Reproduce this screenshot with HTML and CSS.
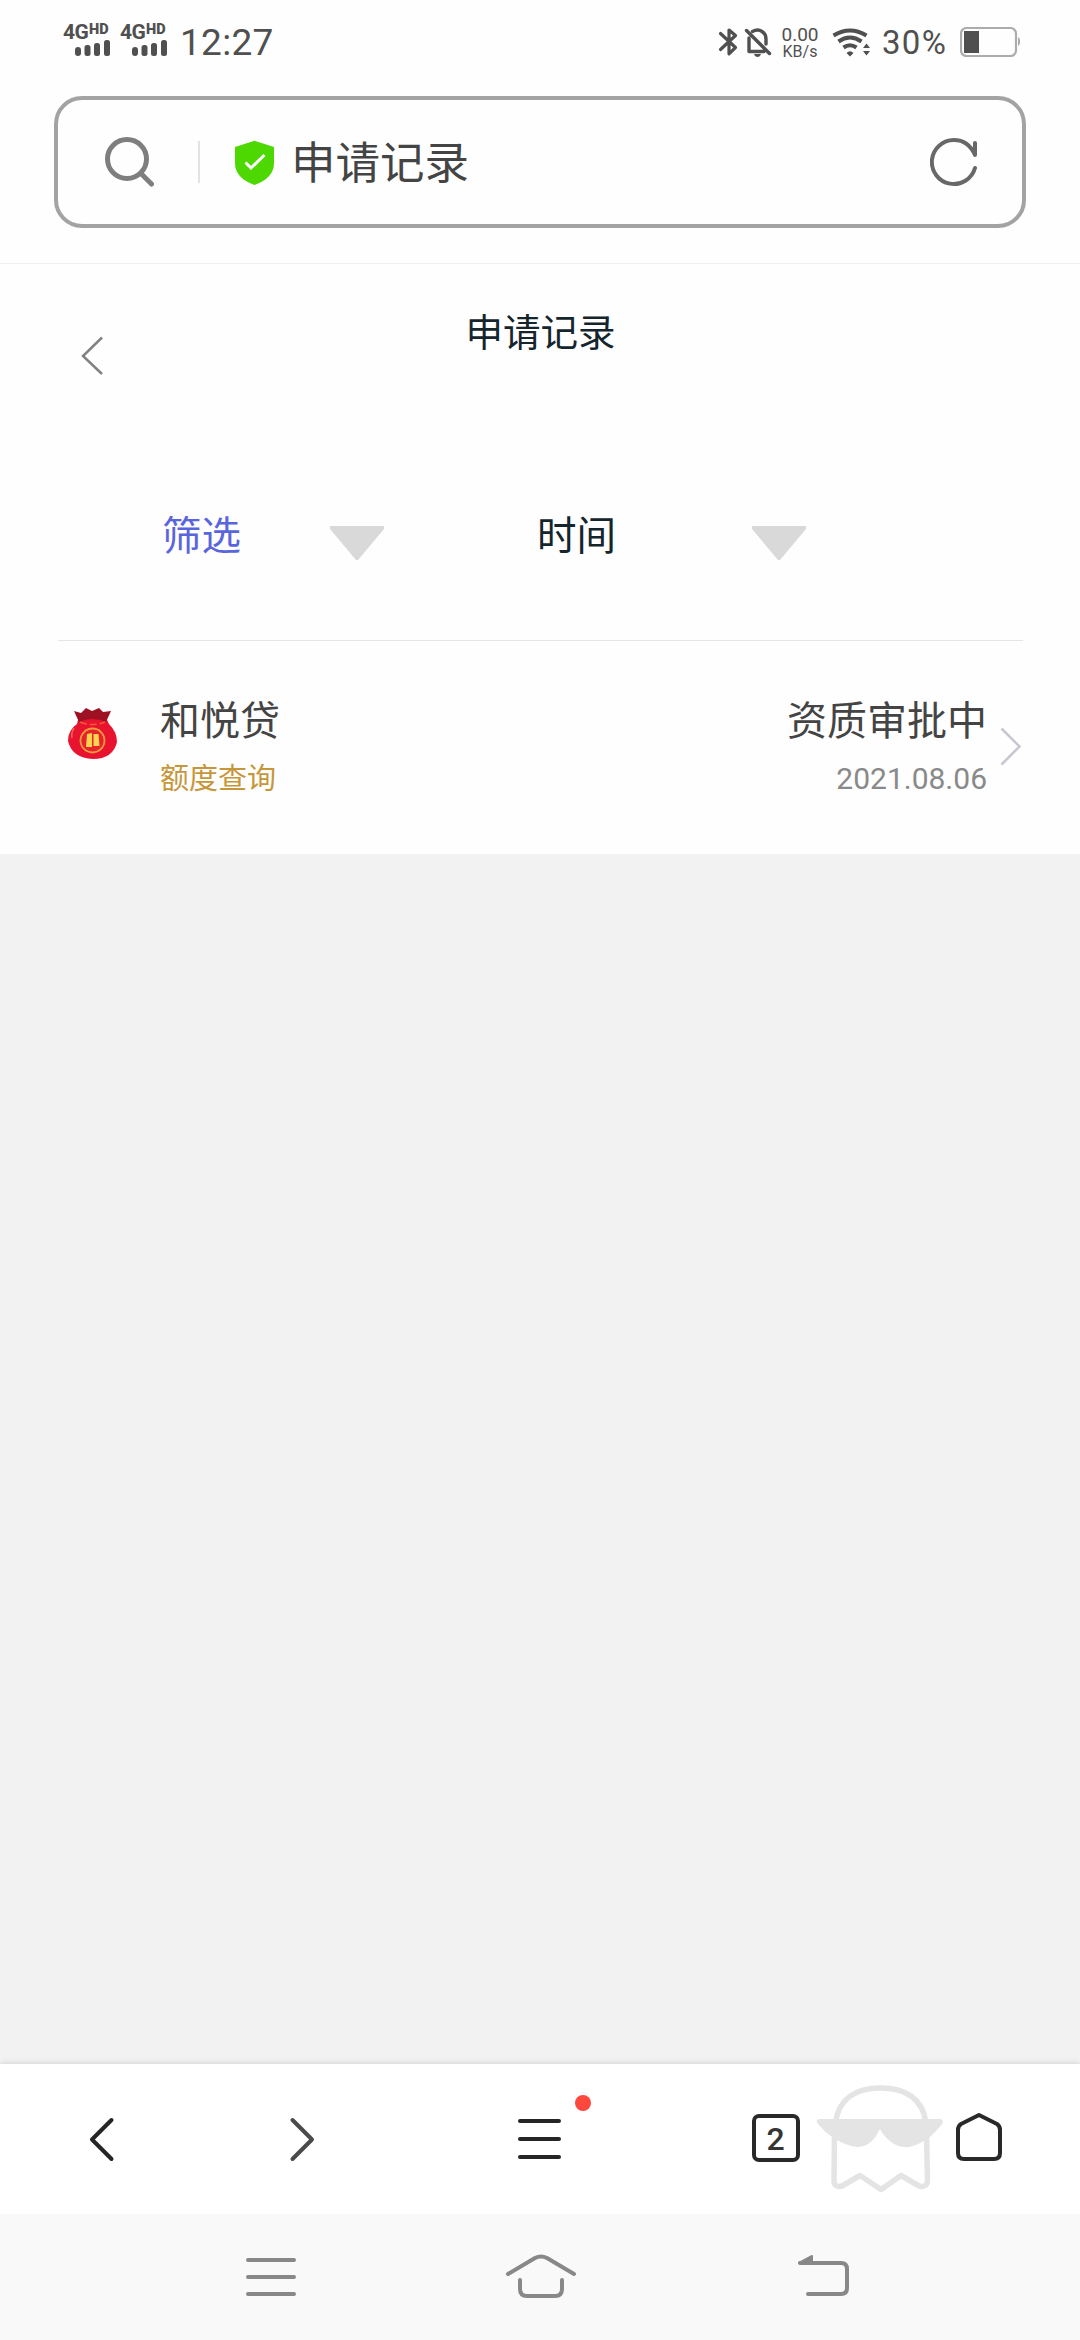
FILE: index.html
```html
<!DOCTYPE html>
<html lang="zh-CN">
<head>
<meta charset="utf-8">
<title>申请记录</title>
<link rel="stylesheet" href="styles.css">
</head>
<body>
<header class="status">
  <div class="signal">
    <div class="net"><span class="gen">4G</span><span class="hd">HD</span></div>
    <svg class="bars" width="35" height="16" viewBox="0 0 35 16"><rect y="7" width="6" height="9" rx="3"/><rect x="9.5" y="5" width="6" height="11" rx="2.5"/><rect x="19" y="3" width="6" height="13" rx="2.5"/><rect x="29" width="6" height="16" rx="2.5"/></svg>
  </div>
  <div class="signal">
    <div class="net"><span class="gen">4G</span><span class="hd">HD</span></div>
    <svg class="bars" width="35" height="16" viewBox="0 0 35 16"><rect y="7" width="6" height="9" rx="3"/><rect x="9.5" y="5" width="6" height="11" rx="2.5"/><rect x="19" y="3" width="6" height="13" rx="2.5"/><rect x="29" width="6" height="16" rx="2.5"/></svg>
  </div>
  <span class="clock">12:27</span>
  <svg class="sysicons" width="56" height="32" viewBox="716 26 56 32">
    <path d="M720.500 33.500L735.500 47.500L729 53.800V30L735.500 35.500L720.500 49.500" fill="none" stroke="#505050" stroke-width="3.200" stroke-linecap="round" stroke-linejoin="round"/>
    <path d="M746.500 30.500L769.500 53.500M749 38V51.500H764M752.500 31.500C760 27.500 766 33 766 39V44" fill="none" stroke="#505050" stroke-width="3.400" stroke-linecap="round" stroke-linejoin="round"/>
    <path d="M754 54H761Q760 57 757.500 57T754 54Z" fill="#505050"/>
  </svg>
  <div class="speed"><span class="rate">0.00</span><span class="unit">KB/s</span></div>
  <svg class="wifi" width="40" height="30" viewBox="832 27 40 30">
    <g fill="none" stroke="#505050" stroke-width="4"><path d="M833.500 35.500Q850 25.500 866.500 35.500"/><path d="M838.500 41.500Q850 33.500 861.500 41.500"/><path d="M843.500 47.500Q850 43 856.500 47.500"/></g>
    <path d="M846.500 53Q850 49.500 853.500 53L850 56.500ZM863 48L866.500 43.500L870 48ZM863 51L866.500 55.500L870 51Z" fill="#505050"/>
  </svg>
  <span class="percent">30%</span>
  <svg class="battery" width="61" height="30" viewBox="960 27 61 30"><rect x="961" y="28" width="55" height="28" rx="5.500" fill="none" stroke="#acacac" stroke-width="2.200"/><rect x="964" y="31" width="15" height="22" fill="#505050"/><path d="M1018 37Q1020 38 1020 40V43Q1020 45 1018 46Z" fill="#acacac"/></svg>
</header>

<div class="address">
  <svg width="50" height="50" viewBox="104 137 50 50" fill="none" stroke="#7e7e7e" stroke-width="5"><circle cx="127" cy="159" r="19.500"/><path d="M141.500 174L151.500 184" stroke-linecap="round"/></svg>
  <i class="sep"></i>
  <svg class="shield" width="40" height="46" viewBox="234 139 40 46"><path d="M254.500 140.700L274 147V163Q274 178 254.500 185Q235 178 235 163V147Z" fill="#4cd800"/><path d="M245.500 162.500L251 168L264.500 155" fill="none" stroke="#fff" stroke-width="3"/></svg>
  <span class="site">申请记录</span>
  <svg class="reload" width="48" height="50" viewBox="930 137 48 50" fill="none" stroke="#686868" stroke-width="4" stroke-linecap="round" stroke-linejoin="round"><path d="M975 143V155C971 146 964 140 954 140A22 22 0 1 0 975 168"/></svg>
</div>

<main class="page">
  <div class="titlebar">
    <svg class="back" width="22" height="40" viewBox="81 336 22 40" fill="none" stroke="#828282" stroke-width="2.500"><path d="M102 337.500L83 356L102 374"/></svg>
    <h1>申请记录</h1>
  </div>
  <div class="filters">
    <span class="active">筛选</span>
    <svg width="54" height="35" viewBox="0 0 54 35"><path d="M0 0H54V3L28 34H26L0 3Z" fill="#d9d9d9"/></svg>
    <span>时间</span>
    <svg width="54" height="35" viewBox="0 0 54 35"><path d="M0 0H54V3L28 34H26L0 3Z" fill="#d9d9d9"/></svg>
  </div>
  <section class="record">
    <svg class="bag" width="50" height="54" viewBox="68 707 50 54">
      <path d="M78 720Q92 716 107 720L109 724Q117 732 117 742Q113 759 93 759Q72 758 68 741Q68 730 77 724Z" fill="#e8142f"/>
      <path d="M74 711L81 713L86 708L92 711L99 708L103 712L111 711L106 722Q92 716 79 722Z" fill="#9e1122"/>
      <path d="M80 722Q92 727 105 722" stroke="#f25b32" stroke-width="1.500" stroke-dasharray="7 3" fill="none"/>
      <path d="M74 728Q71 733 72 738" stroke="#f5664f" stroke-width="1.500" fill="none"/>
      <circle cx="92.500" cy="740.500" r="12" fill="#e5232b" stroke="#f49a3f" stroke-width="1.800"/>
      <path d="M87 734L92 733V747H86ZM93.500 734H98.500L99.500 746H93.500Z" fill="#ffd34f"/>
    </svg>
    <div class="product"><span class="name">和悦贷</span><span class="quota">额度查询</span></div>
    <div class="state"><span class="name">资质审批中</span><span class="date">2021.08.06</span></div>
    <svg class="go" width="22" height="40" viewBox="1000 727 22 40" fill="none" stroke="#c7c8d2" stroke-width="2.600"><path d="M1001.500 728.500L1019.500 746.500L1001.500 764.500"/></svg>
  </section>
</main>
<div class="blank"></div>

<nav class="browserbar">
  <svg width="1080" height="150" viewBox="0 2064 1080 150" fill="none" stroke-linecap="round" stroke-linejoin="round">
    <path d="M111.500 2120L92 2139.500L111.500 2159" stroke="#252525" stroke-width="4"/>
    <path d="M292.500 2120L312 2139.500L292.500 2159" stroke="#4b4b4b" stroke-width="4"/>
    <path d="M520 2121H559M520 2139H559M520 2157H559" stroke="#252525" stroke-width="4"/>
    <circle cx="583" cy="2103" r="8" fill="#fe473d"/>
    <rect x="754" y="2116" width="44" height="44" rx="5" stroke="#292929" stroke-width="4"/>
    <text x="775.500" y="2150" class="tabs">2</text>
    <path d="M835.500 2122C839 2099 855 2088 880.500 2088S922 2099 926 2122M834.500 2134L834 2181Q834.500 2188 842 2186L860 2175.500L881 2189.500L901 2175.500L919 2186Q926.500 2188 927.500 2181L926.500 2134" stroke="#e4e4e4" stroke-width="5.500"/>
    <path d="M819 2119H941Q944 2121 942 2124C932 2137 922 2144 909 2147C897 2149 885 2139 880 2129C874 2141 867 2147 857 2147C842 2145 828 2136 818 2124Q815 2120 819 2119Z" fill="#e4e4e4"/>
    <path d="M979 2115L997 2124Q1000 2126 1000 2130V2153Q1000 2159 994 2159H964Q958 2159 958 2153V2130Q958 2126 961 2124Z" stroke="#292929" stroke-width="4"/>
  </svg>
</nav>
<nav class="sysnav">
  <svg width="1080" height="126" viewBox="0 2214 1080 126" fill="none" stroke="#888" stroke-width="4" stroke-linecap="round" stroke-linejoin="round">
    <path d="M248 2260H294M248 2277H294M248 2294H294"/>
    <path d="M508 2274L535 2258Q541 2255 547 2258L574 2274M520 2280V2289Q520 2296 527 2296H555Q562 2296 562 2289V2280"/>
    <path d="M808 2294H841Q847 2294 847 2288V2269Q847 2263 841 2263H800"/>
    <path d="M799 2263L812 2256V2263Z" stroke-width="2" fill="#888"/>
  </svg>
</nav>
</body>
</html>
```
FILE: styles.css
```css
* { box-sizing: border-box; }
body {
  margin: 0;
  width: 1080px;
  height: 2340px;
  display: flex;
  flex-direction: column;
  overflow: hidden;
  background: #fefefe;
  font-family: Roboto, "Noto Sans CJK SC", sans-serif;
  color: #444;
}
svg { display: block; flex: none; }
span { white-space: nowrap; }

.status { height: 96px; flex: none; display: flex; align-items: flex-start; padding-left: 63px; color: #505050; }
.signal { width: 57px; padding-top: 25px; }
.net { display: flex; height: 15px; align-items: flex-start; font-weight: 700; }
.gen { width: 26px; font-size: 21px; line-height: 15px; letter-spacing: -0.5px; }
.hd { font-size: 14.500px; line-height: 10px; font-weight: 900; }
.bars { margin-left: 12px; fill: #505050; }
.clock { width: 535px; padding-left: 3px; margin-top: 23px; font-size: 37px; line-height: 40px; letter-spacing: 0.3px; }
.sysicons { margin: 26px 0 0 4px; }
.speed { width: 38px; margin: 25px 13px 0 9px; display: flex; flex-direction: column; align-items: center; }
.rate { font-size: 19px; line-height: 19px; }
.unit { font-size: 16px; line-height: 15px; }
.wifi { margin: 27px 0 0 0; }
.percent { width: 78px; margin-top: 24px; padding-left: 10px; font-size: 33px; line-height: 38px; letter-spacing: 1.300px; }
.battery { margin: 27px 0 0 10px; }

.address {
  height: 132px;
  flex: none;
  margin: 0 54px 35px;
  padding: 0 46px;
  display: flex;
  align-items: center;
  border: 4px solid #a3a3a3;
  border-radius: 28px;
}
.sep { width: 2px; height: 42px; margin: 0 34px 0 44px; background: #e3e3e3; }
.site { margin-left: 17px; padding-top: 4px; font-size: 44.500px; line-height: 60px; flex: 1; }
.reload { margin-right: -2px; }

.page { height: 591px; flex: none; border-top: 1px solid #f0f0f0; }
.titlebar { height: 197px; display: flex; padding-left: 81px; align-items: flex-start; }
.back { margin-top: 72px; }
h1 { margin: 41px 0 0; padding-right: 102px; flex: 1; text-align: center; font-size: 37.500px; line-height: 56px; font-weight: 400; color: #14252c; }
.filters {
  height: 180px;
  margin: 0 57px 0 58px;
  padding-left: 104px;
  display: grid;
  grid-template-columns: 168px 207px 215px 54px;
  border-bottom: 1px solid #e6e6e6;
  font-size: 39.500px;
  line-height: 60px;
  color: #14252c;
}
.filters span { margin-top: 46px; }
.filters svg { margin-top: 65px; }
.active { color: #5965dc; }
.record { height: 212px; padding-left: 68px; display: flex; align-items: flex-start; }
.bag { margin-top: 66px; }
.product, .state { margin-top: 51px; display: flex; flex-direction: column; }
.product { margin-left: 42px; }
.state { flex: 1; align-items: flex-end; margin-right: 13px; }
.name { font-size: 40px; line-height: 60px; }
.quota { font-size: 29px; line-height: 44px; margin-top: 5px; color: #c6973a; }
.date { font-size: 30px; line-height: 44px; margin-top: 5px; color: #898989; }
.go { margin: 86px 58px 0 0; }

.blank { flex: 1; background: #f2f2f2; }
.browserbar { height: 150px; flex: none; background: #fff; box-shadow: 0 -1px 6px rgba(0, 0, 0, 0.12); }
.tabs { font: 500 32px Roboto, sans-serif; text-anchor: middle; fill: #353535; stroke: none; }
.sysnav { height: 126px; flex: none; background: #f9f9f9; }
```
